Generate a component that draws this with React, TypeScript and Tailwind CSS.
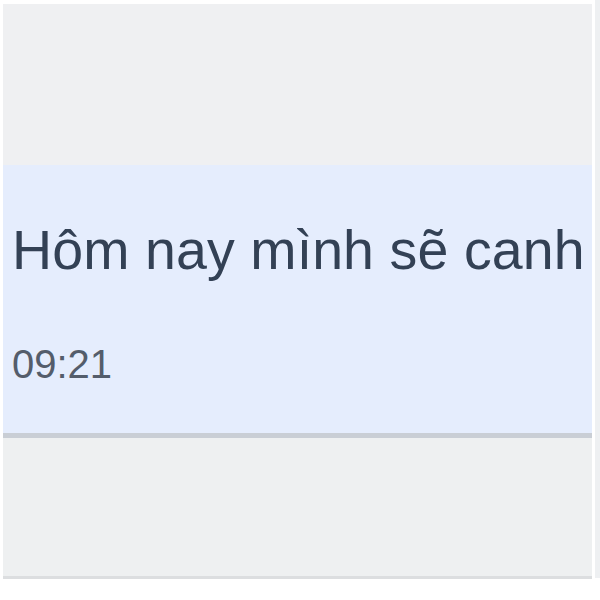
export default function App() {
  return (
    <div className="w-[600px] h-[600px] bg-white flex overflow-hidden" style={{ fontFamily: '"Liberation Sans", Arial, sans-serif' }}>
      <div className="ml-[3px] mt-[4px] w-[589px] h-[575px] bg-[#eff0f2] border-b-[3px] border-[#dcdee0] flex flex-col overflow-hidden">
        <div className="h-[161px] bg-[#eff0f2]" />
        <div className="h-[273px] bg-[#e5edfd] border-b-[5px] border-[#c9ced5] pl-[9px] pt-[57px] overflow-hidden">
          <div className="text-[55.5px] leading-[56px] tracking-[0.1px] text-[#334155] whitespace-nowrap">Hôm nay mình sẽ canh nồi</div>
          <div className="mt-[66px] text-[40px] leading-[40px] text-[#545d6b]">09:21</div>
        </div>
        <div className="flex-1 bg-[#eef0f1]" />
      </div>
      <div className="ml-[3px] w-[5px] h-[578px] bg-[#eef0f2]" />
    </div>
  );
}
